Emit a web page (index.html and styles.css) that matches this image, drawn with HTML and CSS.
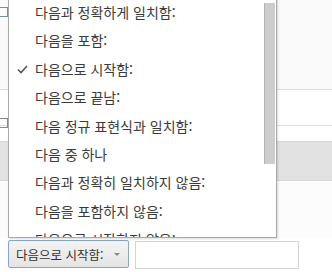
FILE: index.html
```html
<!DOCTYPE html>
<html lang="ko">
<head>
  <meta charset="UTF-8">
  <title>필터</title>
  <link rel="stylesheet" href="styles.css">
</head>
<body>

  <div class="grid">
    <div class="row row-head"><span class="box"></span></div>
    <div class="row row-plain"></div>
    <div class="row row-gap"><span class="box"></span></div>
    <div class="row row-band"></div>
    <div class="row row-rest"></div>
  </div>

  <div class="filter">
    <button class="select">다음으로 시작함: <span class="arrow"></span></button>
    <input class="value" type="text">
  </div>

  <div class="menu">
    <ul>
      <li>다음과 정확하게 일치함:</li>
      <li>다음을 포함:</li>
      <li class="checked">
        <svg class="tick" width="11" height="9" viewBox="0 0 11 9"><path d="M1 4.5 L4 7.5 L10 1" fill="none" stroke="#555" stroke-width="1.6"/></svg>
        다음으로 시작함:
      </li>
      <li>다음으로 끝남:</li>
      <li>다음 정규 표현식과 일치함:</li>
      <li>다음 중 하나</li>
      <li>다음과 정확히 일치하지 않음:</li>
      <li>다음을 포함하지 않음:</li>
      <li class="cut">다음으로 시작하지 않음:</li>
    </ul>
    <div class="thumb"></div>
  </div>

</body>
</html>
```

FILE: styles.css
```css
body {
  margin: 0;
  font-family: "Noto Sans CJK KR", "Noto Sans", sans-serif;
  font-size: 13px;
  color: #333;
  background: #fff;
  position: relative;
  width: 332px;
  height: 272px;
  overflow: hidden;
}

.grid {
  height: 238px;
}

.row {
  position: relative;
  box-sizing: border-box;
}

.row-head {
  height: 90px;
  background: #fafafa;
  border-bottom: 1px solid #dcdcdc;
}

.row-plain {
  height: 36px;
  border-bottom: 1px solid #dcdcdc;
}

.row-gap {
  height: 15px;
}

.row-band {
  height: 40px;
  background: #e2e2e2;
  border-top: 1px solid #d6d6d6;
  border-bottom: 1px solid #d6d6d6;
}

.row-rest {
  height: 57px;
  background: #fcfcfc;
}

.box {
  position: absolute;
  left: -3px;
  width: 9px;
  height: 8px;
  border: 1px solid #6f8fae;
}

.row-head .box { top: 7px; }
.row-gap .box { top: -8px; border-color: #888; }

.filter {
  display: flex;
  gap: 6px;
  padding: 2px 0 0 8px;
}

.select {
  box-sizing: border-box;
  width: 121px;
  height: 28px;
  padding: 0 0 0 7px;
  display: flex;
  align-items: center;
  justify-content: space-between;
  font-family: inherit;
  font-size: 12.5px;
  color: #333;
  background: linear-gradient(#f4f4f4, #e4e4e4);
  border: 1px solid #86a5cf;
  border-radius: 2px;
}

.arrow {
  width: 0;
  height: 0;
  margin-right: 8px;
  border-left: 3px solid transparent;
  border-right: 3px solid transparent;
  border-top: 3px solid #888;
}

.value {
  box-sizing: border-box;
  width: 164px;
  height: 28px;
  margin-top: 1px;
  border: 1px solid #d4d4d4;
  background: #fff;
}

.menu {
  position: absolute;
  left: 8px;
  top: -2px;
  width: 269px;
  height: 240px;
  box-sizing: border-box;
  background: #fff;
  border: 1px solid #a9a9a9;
  border-top: none;
  box-shadow: 1px 1px 2px rgba(0, 0, 0, 0.15);
  overflow: hidden;
}

.menu ul {
  list-style: none;
  margin: 0;
  padding: 0;
}

.menu li {
  position: relative;
  height: 28.4px;
  line-height: 28.4px;
  padding-left: 26px;
  font-size: 14px;
  color: #3a3a3a;
  white-space: nowrap;
}

.menu li.cut {
  height: 12px;
  overflow: hidden;
}

.tick {
  position: absolute;
  left: 8px;
  top: 10px;
}

.thumb {
  position: absolute;
  right: 1px;
  top: 5px;
  width: 10px;
  height: 161px;
  background: #cdcdcd;
  border-left: 1px solid #b4b4b4;
}
```
